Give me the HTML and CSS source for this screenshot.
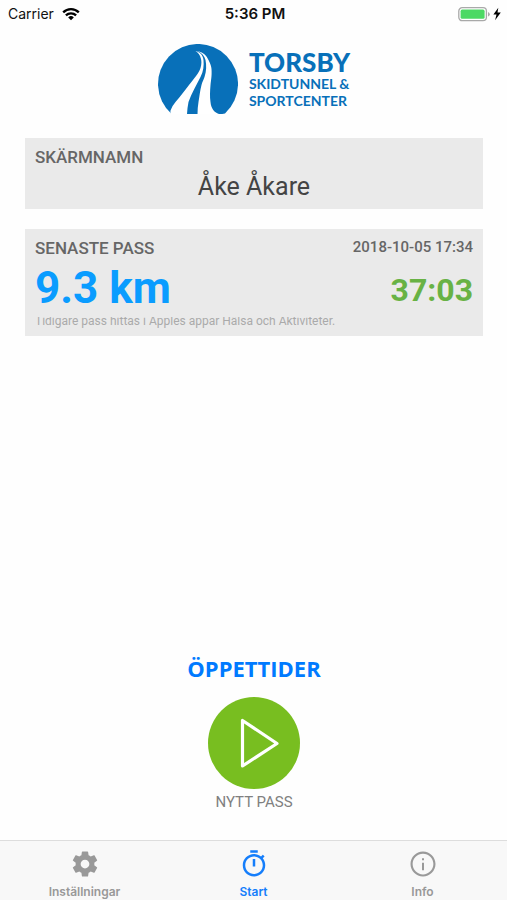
FILE: index.html
```html
<!DOCTYPE html>
<html lang="sv">
<head>
<meta charset="utf-8">
<meta name="viewport" content="width=device-width, initial-scale=1">
<title>Torsby Skidtunnel &amp; Sportcenter</title>
<link rel="stylesheet" href="styles.css">
</head>
<body>
<div class="app">
  <header class="status">
    <div class="carrier">
      <span>Carrier</span>
      <svg width="18" height="13" viewBox="0 0 18 13" aria-hidden="true">
        <g fill="none" stroke="#000" stroke-width="2.3">
          <path d="M1.2 4.4a11 11 0 0 1 15.6 0"/>
          <path d="M3.9 7.400a7.2 7.2 0 0 1 10.2 0"/>
        </g>
        <path d="M9 12.300 6.2 9.400a4 4 0 0 1 5.6 0z"/>
      </svg>
    </div>
    <time class="clock">5:36 PM</time>
    <div class="battery">
      <svg width="44" height="15" viewBox="0 0 44 15" aria-hidden="true">
        <rect x=".8" y=".7" width="27.6" height="13" rx="3.4" fill="#fff" stroke="#a9a9a9" stroke-width="1.3"/>
        <rect x="2.6" y="2.6" width="24" height="9.2" rx="1.6" fill="#4cd964"/>
        <path d="M30 4.900v4.6q1.8-.6 1.8-2.3T30 4.900z" fill="#a9a9a9"/>
        <path d="M40.300.8 35.4 7.600h3.1l-1.4 5.7L42.800 5.600h-3.3z"/>
      </svg>
    </div>
  </header>

  <main class="content">
    <div class="logo">
      <svg class="mark" width="80" height="70" viewBox="0 0 80 70" aria-hidden="true">
        <path fill="#0870b9" d="M13.600 70A40 40 0 1 1 67 69.500Q65 70 60 70z"/>
        <path fill="#fff" d="M37.500 7C42 8 45 11 45.500 16C46 22 45.500 27 42.500 33C38.500 41 33.500 49 30.500 58Q29.300 64 29 70H13Q12 68.500 12.500 66.500Q14 62 17.500 58C23 51.500 26.500 47 31 41C36 34.500 40.500 30 42.500 24C43.700 20 43.500 17 43 15C42 11 40.500 9 37.500 7z"/>
        <path fill="#fff" d="M39.500 7C46 8.500 48.500 12 50.500 16C52.500 20 53.300 22 53.500 25C54 32 53 36 52.500 41C52 47 51.700 53 52.500 58C53 64 56 68.500 61 70H39.500Q39.500 64 40.500 58C41.500 52 42 47 43.500 41C44.500 37 45.500 36 46.500 33C48.500 27 48.500 21 47.500 16C46.500 12 44 9 39.500 7z"/>
      </svg>
      <div class="wordmark">
        <strong>TORSBY</strong>
        <span>SKIDTUNNEL &amp;</span>
        <span>SPORTCENTER</span>
      </div>
    </div>

    <section class="card name-card">
      <h2>SKÄRMNAMN</h2>
      <p class="name">Åke Åkare</p>
    </section>

    <section class="card">
      <div class="row">
        <h2>SENASTE PASS</h2>
        <time class="date">2018-10-05 17:34</time>
      </div>
      <div class="row result">
        <strong class="distance">9.3 km</strong>
        <strong class="duration">37:03</strong>
      </div>
      <p class="hint"><span>Tidigare pass hittas i Apples appar Hälsa och Aktiviteter.</span></p>
    </section>

    <div class="actions">
      <a class="hours" href="#oppettider">ÖPPETTIDER</a>
      <button class="new-pass" type="button">
        <svg width="92" height="92" viewBox="0 0 92 92" aria-hidden="true">
          <circle cx="46" cy="46" r="46" fill="#78be20"/>
          <path d="M34.500 23.500v45.500L69 46.500z" fill="none" stroke="#fff" stroke-width="3.200" stroke-linejoin="round"/>
        </svg>
        <span>NYTT PASS</span>
      </button>
    </div>
  </main>

  <nav class="tabs">
    <a href="#installningar">
      <svg width="30" height="30" viewBox="0 0 24 24" fill="currentColor" aria-hidden="true"><path d="M19.430 12.980c.04-.32.07-.64.07-.98s-.03-.66-.07-.98l2.110-1.650c.19-.15.24-.42.12-.64l-2-3.460c-.12-.22-.39-.3-.61-.22l-2.490 1c-.52-.4-1.080-.73-1.690-.98l-.38-2.650C14.460 2.180 14.250 2 14 2h-4c-.25 0-.46.18-.49.42l-.38 2.650c-.61.25-1.170.59-1.690.98l-2.490-1c-.23-.09-.49 0-.61.22l-2 3.460c-.13.22-.07.49.12.64l2.110 1.650c-.04.32-.07.65-.07.98s.03.66.07.98l-2.110 1.650c-.19.15-.24.42-.12.64l2 3.460c.12.22.39.3.61.22l2.490-1c.52.4 1.080.73 1.690.98l.38 2.650c.03.24.24.42.49.42h4c.25 0 .46-.18.49-.42l.38-2.650c.61-.25 1.170-.59 1.690-.98l2.490 1c.23.09.49 0 .61-.22l2-3.460c.12-.22.07-.49-.12-.64l-2.110-1.650zM12 15.500c-1.930 0-3.500-1.570-3.500-3.500s1.570-3.500 3.500-3.500 3.500 1.570 3.500 3.500-1.570 3.500-3.500 3.500z"/></svg>
      <span>Inställningar</span>
    </a>
    <a href="#start" class="active" aria-current="page">
      <svg width="30" height="30" viewBox="0 0 24 24" fill="currentColor" aria-hidden="true"><path d="M15 1H9v2h6V1zm-4 13h2V8h-2v6zm8.030-6.610 1.420-1.420c-.43-.51-.9-.99-1.410-1.410l-1.420 1.420C16.070 4.740 14.120 4 12 4c-4.970 0-9 4.030-9 9s4.020 9 9 9 9-4.030 9-9c0-2.120-.74-4.070-1.970-5.610zM12 20c-3.870 0-7-3.130-7-7s3.130-7 7-7 7 3.130 7 7-3.130 7-7 7z"/></svg>
      <span>Start</span>
    </a>
    <a href="#info">
      <svg width="30" height="30" viewBox="0 0 24 24" fill="currentColor" aria-hidden="true"><path d="M11.200 17h1.600v-6h-1.600v6zm.8-15C6.480 2 2 6.480 2 12s4.480 10 10 10 10-4.480 10-10S17.520 2 12 2zm0 18.300c-4.580 0-8.300-3.720-8.300-8.300s3.720-8.300 8.300-8.300 8.300 3.720 8.300 8.300-3.720 8.300-8.300 8.300zM11.200 9h1.600V7.400h-1.600V9z"/></svg>
      <span>Info</span>
    </a>
  </nav>
</div>
</body>
</html>
```
FILE: styles.css
```css
* {
  box-sizing: border-box;
}

body,
h2,
p {
  margin: 0;
}

body {
  background: #fefefe;
  color: #444;
  font-family: Roboto, sans-serif;
}

svg {
  display: block;
}

.app {
  display: flex;
  flex-direction: column;
  min-height: 100vh;
}

.status {
  display: grid;
  grid-template-columns: 1fr auto 1fr;
  align-items: center;
  height: 28px;
  padding: 0 5px 0 8px;
  color: #111;
  font: 14px/20px Inter, sans-serif;
}

.carrier {
  display: flex;
  align-items: center;
  gap: 8px;
}

.clock {
  font-size: 15px;
  font-weight: 600;
}

.battery {
  justify-self: end;
}

.content {
  display: flex;
  flex: 1;
  flex-direction: column;
  padding: 16px 24px 28px 25px;
}

.logo {
  display: flex;
  justify-content: center;
  gap: 11px;
  margin-bottom: 24px;
  color: #0870b9;
}

.wordmark {
  display: flex;
  flex-direction: column;
  padding-top: 5px;
  font: 700 14px/17px Lato, sans-serif;
}

.wordmark strong {
  font-size: 26px;
  font-weight: 900;
  line-height: 26px;
}

.card {
  padding: 8px 10px;
  background: #eaeaea;
}

.name-card {
  margin-bottom: 20px;
}

h2 {
  color: #666;
  font-size: 17px;
  font-weight: 500;
  line-height: 22px;
}

.name {
  padding-top: 5px;
  font-size: 25px;
  line-height: 28px;
  text-align: center;
}

.row {
  display: flex;
  align-items: flex-start;
  justify-content: space-between;
}

.date {
  color: #666;
  font-size: 15px;
  font-weight: 500;
  line-height: 20px;
}

.result {
  align-items: center;
  height: 58px;
}

.distance {
  color: #0a9cff;
  font-size: 44px;
}

.duration {
  padding-top: 4px;
  color: #68b245;
  font-size: 32px;
}

.hint {
  display: flex;
  align-items: flex-end;
  height: 11px;
  overflow: hidden;
  color: #aaa;
  font-size: 12px;
  line-height: 14px;
}

.actions {
  display: flex;
  flex-direction: column;
  align-items: center;
  gap: 13px;
  margin-top: auto;
}

.hours {
  color: #007aff;
  font: 700 22px/32px "Open Sans", sans-serif;
  text-decoration: none;
}

.new-pass {
  display: flex;
  flex-direction: column;
  align-items: center;
  gap: 3px;
  padding: 0;
  border: 0;
  background: none;
  color: #808080;
  font: 15px/20px Roboto, sans-serif;
}

.tabs {
  display: grid;
  grid-template-columns: repeat(3, 1fr);
  height: 60px;
  padding-top: 8px;
  border-top: 1px solid #ddd;
  background: #f8f8f8;
}

.tabs a {
  display: flex;
  flex-direction: column;
  align-items: center;
  gap: 5px;
  color: #999;
  font: 600 12px/16px Inter, sans-serif;
  text-decoration: none;
}

.tabs .active {
  color: #157efb;
}
```
